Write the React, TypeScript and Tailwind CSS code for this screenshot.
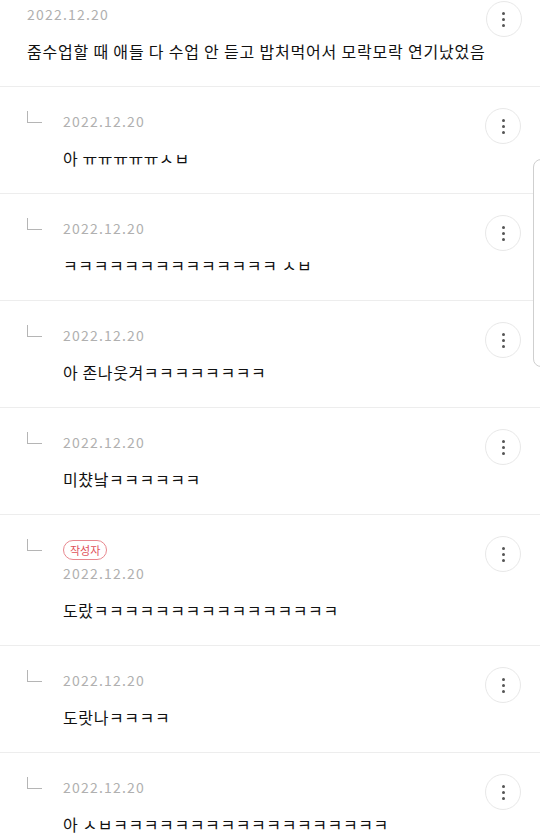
import React from "react";

const font = { fontFamily: '"Noto Sans CJK KR", "Noto Sans", sans-serif' };

function MoreButton() {
  return (
    <button className="w-[36px] h-[36px] rounded-full border border-[#e8e8e8] bg-white flex flex-col items-center justify-center gap-[3px] shrink-0">
      <span className="w-[3px] h-[3px] rounded-full bg-[#555]" />
      <span className="w-[3px] h-[3px] rounded-full bg-[#555]" />
      <span className="w-[3px] h-[3px] rounded-full bg-[#555]" />
    </button>
  );
}

function DateText() {
  return (
    <div className="text-[14px] leading-[20px] tracking-[1.2px] text-[#b0b0b0]">2022.12.20</div>
  );
}

type Reply = { text: string; author?: boolean };

const replies: Reply[] = [
  { text: "아 ㅠㅠㅠㅠㅠㅅㅂ" },
  { text: "ㅋㅋㅋㅋㅋㅋㅋㅋㅋㅋㅋㅋㅋㅋ ㅅㅂ" },
  { text: "아 존나웃겨ㅋㅋㅋㅋㅋㅋㅋㅋ" },
  { text: "미챴낰ㅋㅋㅋㅋㅋㅋ" },
  { text: "도랐ㅋㅋㅋㅋㅋㅋㅋㅋㅋㅋㅋㅋㅋㅋㅋㅋ", author: true },
  { text: "도랏나ㅋㅋㅋㅋ" },
  { text: "아 ㅅㅂㅋㅋㅋㅋㅋㅋㅋㅋㅋㅋㅋㅋㅋㅋㅋㅋㅋㅋ" },
];

export default function App() {
  return (
    <div className="relative w-[540px] h-[839px] overflow-hidden bg-white text-[#111]" style={font}>
      <div className="flex items-start border-b border-[#ededed] pl-[27px] pr-[19px] pt-[4px] pb-[23px]">
        <div className="flex-1 flex flex-col gap-[15px]">
          <DateText />
          <div className="text-[16px] leading-[24px] tracking-[0.8px] whitespace-nowrap">줌수업할 때 애들 다 수업 안 듣고 밥처먹어서 모락모락 연기났었음</div>
        </div>
        <div className="-mt-[3px]">
          <MoreButton />
        </div>
      </div>
      {replies.map((r, i) => (
        <div key={i} className="flex items-start border-b border-[#ededed] pl-[27px] pr-[19px] pt-[24px] pb-[23px]">
          <div className="w-[15px] h-[12px] border-l-[1.5px] border-b-[1.5px] border-[#b5b5b5] mr-[21px] mt-[0px] shrink-0" />
          <div className="flex-1 flex flex-col">
            {r.author && (
              <div className="self-start h-[20px] px-[6px] mt-[1px] mb-[3px] rounded-full border border-[#e8888f] text-[#e0505a] text-[11px] leading-[18px]">
                작성자
              </div>
            )}
            <DateText />
            <div className="mt-[15px] text-[16px] leading-[24px] tracking-[0.6px] whitespace-nowrap">{r.text}</div>
          </div>
          <div className="-mt-[3px]">
            <MoreButton />
          </div>
        </div>
      ))}
      <div className="absolute left-[533px] top-[159px] w-[20px] h-[208px] rounded-[8px] border border-[#cfcfcf] bg-white" />
    </div>
  );
}
